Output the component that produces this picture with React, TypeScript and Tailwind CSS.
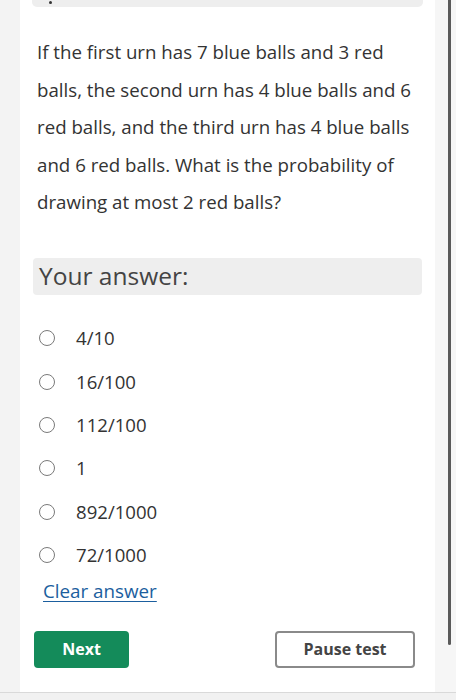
import { useState } from "react";

const options = ["4/10", "16/100", "112/100", "1", "892/1000", "72/1000"];

export default function App() {
  const [picked, setPicked] = useState<number | null>(null);

  return (
    <div
      className="relative flex h-[700px] w-[456px] flex-col overflow-hidden bg-[#f3f3f3] text-[#333]"
      style={{ fontFamily: '"Open Sans", "Liberation Sans", sans-serif' }}
    >
      <div className="flex flex-1">
        <div className="w-[20px] bg-[#f3f3f3]" />
        <main className="flex w-[415px] flex-col bg-white">
          {/* cut-off header above */}
          <div className="relative mx-[12px] h-[7px] rounded-b-[5px] bg-[#eeeeee]">
            <span className="absolute left-[17px] top-[1px] h-[3px] w-[3px] rounded-full bg-[#333]" />
          </div>

          <p className="mt-[26px] pl-[17px] pr-[12px] text-[18.7px] leading-[37.5px]">
            If the first urn has 7 blue balls and 3 red balls, the second urn has 4 blue balls and 6
            red balls, and the third urn has 4 blue balls and 6 red balls. What is the probability of
            drawing at most 2 red balls?
          </p>

          <div className="mx-[13px] mt-[37px] flex h-[37px] items-center rounded-[4px] bg-[#eeeeee] pl-[6px] text-[24.5px] text-[#444]">
            Your answer:
          </div>

          <ul className="mt-[22px] flex flex-col">
            {options.map((o, i) => (
              <li
                key={o}
                className="flex h-[43.4px] cursor-pointer items-center pl-[19px] text-[18.6px] text-[#333]"
                onClick={() => setPicked(i)}
              >
                <span className="flex h-[16px] w-[16px] items-center justify-center rounded-full border-[1.5px] border-[#7a7a7a]">
                  {picked === i && <span className="h-[8px] w-[8px] rounded-full bg-[#555]" />}
                </span>
                <span className="ml-[21px]">{o}</span>
              </li>
            ))}
          </ul>

          <div className="mt-[2px] pl-[23px]">
            <button
              className="text-[18.8px] leading-[24px] text-[#1b5e9e] underline underline-offset-[3px]"
              onClick={() => setPicked(null)}
            >
              Clear answer
            </button>
          </div>

          <div className="mt-[27px] flex items-center justify-between pl-[14px] pr-[20px]">
            <button className="h-[37px] w-[95px] rounded-[4px] bg-[#148b5a] text-[16px] font-bold text-white">
              Next
            </button>
            <button className="h-[37px] w-[140px] rounded-[4px] border-2 border-[#8a8a8a] bg-white text-[16px] font-bold text-[#444]">
              Pause test
            </button>
          </div>
        </main>
        <div className="relative flex-1 bg-[#f6f6f6]">
          <div className="absolute left-[13px] top-0 h-[645px] w-[3px] rounded-b-full bg-[#5a5a5a]" />
        </div>
      </div>
      <div className="h-[8px] border-t border-[#d9d9d9] bg-[#f1f1f1]" />
    </div>
  );
}
